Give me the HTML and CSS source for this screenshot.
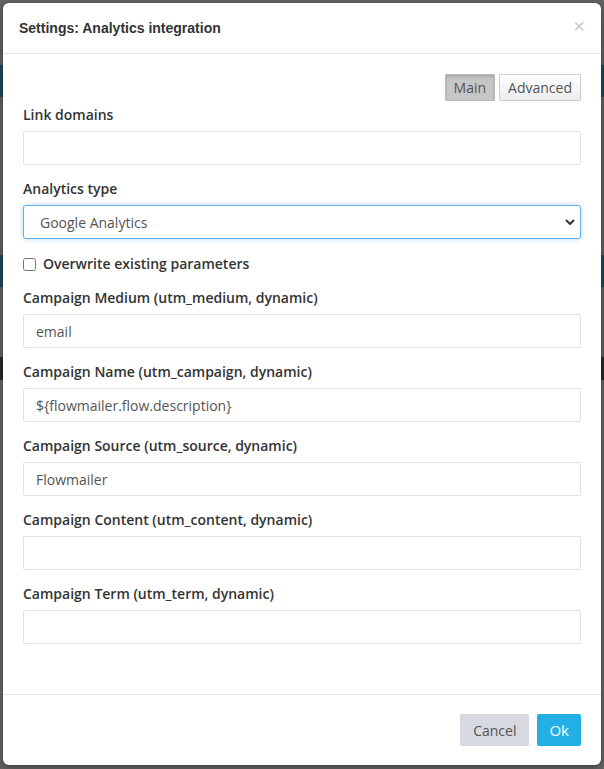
FILE: index.html
```html
<!DOCTYPE html>
<html lang="en">
<head>
  <meta charset="UTF-8">
  <title>Settings: Analytics integration</title>
  <link rel="stylesheet" href="styles.css">
</head>
<body>

  <!-- Settings Modal -->
  <div class="modal">
    <div class="modal-header">
      <h4>Settings: Analytics integration</h4>
      <span class="close">&times;</span>
    </div>

    <div class="modal-body">
      <div class="tabs">
        <button class="tab active">Main</button>
        <button class="tab">Advanced</button>
      </div>

      <div class="field">
        <label for="linkDomains">Link domains</label>
        <input type="text" id="linkDomains">
      </div>

      <div class="field">
        <label for="analyticsType">Analytics type</label>
        <select id="analyticsType" class="focused">
          <option>Google Analytics</option>
        </select>
      </div>

      <div class="check">
        <input type="checkbox" id="overwrite">
        <label for="overwrite">Overwrite existing parameters</label>
      </div>

      <div class="field">
        <label for="utmMedium">Campaign Medium (utm_medium, dynamic)</label>
        <input type="text" id="utmMedium" value="email">
      </div>

      <div class="field">
        <label for="utmCampaign">Campaign Name (utm_campaign, dynamic)</label>
        <input type="text" id="utmCampaign" value="${flowmailer.flow.description}">
      </div>

      <div class="field">
        <label for="utmSource">Campaign Source (utm_source, dynamic)</label>
        <input type="text" id="utmSource" value="Flowmailer">
      </div>

      <div class="field">
        <label for="utmContent">Campaign Content (utm_content, dynamic)</label>
        <input type="text" id="utmContent">
      </div>

      <div class="field">
        <label for="utmTerm">Campaign Term (utm_term, dynamic)</label>
        <input type="text" id="utmTerm">
      </div>
    </div>

    <div class="modal-footer">
      <button class="btn btn-cancel">Cancel</button>
      <button class="btn btn-ok">Ok</button>
    </div>
  </div>

</body>
</html>
```

FILE: styles.css
```css
* {
  box-sizing: border-box;
}
body {
  margin: 0;
  padding: 3px 3px 0 3px;
  font-family: 'Open Sans', sans-serif;
  color: #333;
  background:
    linear-gradient(#636363, #636363) 0 0 / 100% 65px no-repeat,
    linear-gradient(#1d4a5b, #1d4a5b) 0 65px / 100% 32px no-repeat,
    linear-gradient(#636363, #636363) 0 97px / 100% 158px no-repeat,
    linear-gradient(#1d4a5b, #1d4a5b) 0 255px / 100% 32px no-repeat,
    linear-gradient(#636363, #636363) 0 287px / 100% 70px no-repeat,
    linear-gradient(#2a2a2a, #2a2a2a) 0 357px / 100% 23px no-repeat,
    #666;
  height: 769px;
  overflow: hidden;
}

/* Modal */
.modal {
  width: 598px;
  background: #fff;
  border-radius: 6px;
  box-shadow: 0 3px 9px rgba(0, 0, 0, 0.4);
}
.modal-header {
  height: 51px;
  padding: 0 16px;
  display: flex;
  align-items: center;
  justify-content: space-between;
  border-bottom: 1px solid #e5e5e5;
}
.modal-header h4 {
  margin: 0 0 1px 0;
  font-family: 'Liberation Sans', Arial, sans-serif;
  font-size: 14px;
  font-weight: bold;
  color: #333;
}
.close {
  font-family: 'Liberation Sans', Arial, sans-serif;
  font-size: 20px;
  color: #c8c8c8;
  margin-bottom: 3px;
  cursor: pointer;
}
.modal-body {
  padding: 20px 20px 36px 20px;
}

/* Tabs */
.tabs {
  display: flex;
  justify-content: flex-end;
  gap: 4px;
  margin-bottom: 4px;
}
.tab {
  font-family: 'Open Sans', sans-serif;
  font-size: 14px;
  color: #555;
  height: 27px;
  padding: 0 8px;
  border: 1px solid #ccc;
  border-radius: 1px;
  background: linear-gradient(#fff, #ececec);
  cursor: pointer;
}
.tab.active {
  background: #c6c6c6;
  border-color: #b8b8b8;
  box-shadow: inset 0 2px 3px rgba(0, 0, 0, 0.15);
  padding: 0 8px;
}

/* Fields */
.field {
  margin-bottom: 14px;
}
.field label {
  display: block;
  font-size: 14px;
  font-weight: 600;
  line-height: 20px;
  margin-bottom: 6px;
}
.field input,
.field select {
  display: block;
  width: 100%;
  height: 34px;
  padding: 6px 12px;
  font-family: 'Open Sans', sans-serif;
  font-size: 14px;
  color: #555;
  background: #fff;
  border: 1px solid #e3e3e6;
  border-radius: 2px;
  outline: none;
}
.field select {
  -webkit-appearance: none;
  appearance: none;
  padding: 6px 16px;
  border-color: #66afe9;
  border-radius: 3px;
  box-shadow: 0 0 5px rgba(102, 175, 233, 0.5);
  background: #fff url("data:image/svg+xml;utf8,<svg xmlns='http://www.w3.org/2000/svg' width='10' height='6' viewBox='0 0 10 6'><path d='M1 1l4 4 4-4' fill='none' stroke='%23333' stroke-width='2'/></svg>") no-repeat right 5px center;
}
.check {
  display: flex;
  align-items: center;
  gap: 7px;
  margin: 15px 0 14px 0;
}
.check input {
  margin: 0;
  width: 13px;
  height: 13px;
}
.check label {
  font-size: 14px;
  font-weight: 600;
  line-height: 20px;
}

/* Footer */
.modal-footer {
  border-top: 1px solid #e5e5e5;
  padding: 19px 20px 19px 20px;
  display: flex;
  justify-content: flex-end;
  gap: 8px;
}
.btn {
  font-family: 'Open Sans', sans-serif;
  font-size: 14px;
  height: 32px;
  border: none;
  border-radius: 2px;
  cursor: pointer;
}
.btn-cancel {
  background: #d6d9df;
  color: #555;
  padding: 0 13px;
}
.btn-ok {
  background: #23afe6;
  color: #fff;
  padding: 0 12px;
  font-size: 15px;
}
```
